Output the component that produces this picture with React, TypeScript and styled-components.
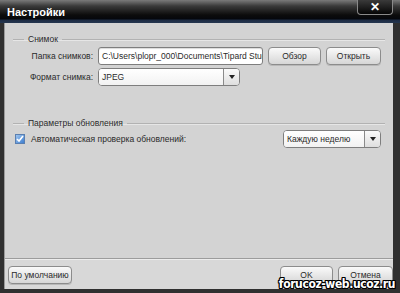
import styled, { createGlobalStyle } from 'styled-components';

const GlobalStyle = createGlobalStyle`
  html, body {
    margin: 0;
    padding: 0;
    background: #2a2a2a;
  }
  * {
    box-sizing: border-box;
  }
`;

const Window = styled.div`
  position: relative;
  width: 400px;
  height: 293px;
  display: flex;
  flex-direction: column;
  background: #303030;
  font-family: 'Liberation Sans', Arial, sans-serif;
  font-size: 8.5px;
  color: #2a2a2a;
  overflow: hidden;
`;

const TitleBar = styled.div`
  position: relative;
  height: 23px;
  flex-shrink: 0;
  display: flex;
  align-items: center;
  padding: 0 7px 2px;
  background: linear-gradient(#7a7a7a 0px, #3a3a3a 6px, #0c0c0c 15px, #05070c 19px, #1d2c44 20px, #25364f 23px);
`;

const Title = styled.span`
  color: #ffffff;
  font-weight: bold;
  font-size: 11px;
  margin-top: 2px;
`;

const CloseButton = styled.div`
  position: absolute;
  top: 0;
  right: 7px;
  width: 36px;
  height: 15px;
  border: 1px solid #8a8a8a;
  border-top: none;
  border-radius: 0 0 4px 4px;
  background: linear-gradient(#3a3a3a, #050505);
  color: #ffffff;
  font-size: 12px;
  font-weight: bold;
  display: flex;
  align-items: center;
  justify-content: center;
  line-height: 1;
`;

const Frame = styled.div`
  flex: 1;
  display: flex;
  flex-direction: column;
  margin: 0 7px 4px 4px;
  background: #d3d3d3;
  border-left: 1px solid #9a9a9a;
`;

const Content = styled.div`
  flex: 1;
  padding: 11px 8px 0 8px;
`;

const Group = styled.fieldset`
  margin: 0;
  padding: 0;
  border: none;
  border-top: 1px solid #b2b2b2;
  box-shadow: inset 0 1px 0 #e6e6e6;
`;

const Legend = styled.legend`
  margin-left: 11px;
  padding: 0 4px;
  color: #2a2a2a;
`;

const GroupBody = styled.div<{ $top: number; $bottom: number }>`
  display: flex;
  flex-direction: column;
  gap: 3px;
  padding: ${({ $top, $bottom }) => `${$top}px 0 ${$bottom}px 0`};
`;

const FormRow = styled.div`
  display: flex;
  align-items: center;
  gap: 5px;
`;

const Label = styled.span`
  width: 80px;
  text-align: right;
  white-space: nowrap;
`;

const PathInput = styled.div`
  width: 165px;
  height: 18px;
  background: #ffffff;
  border: 1px solid #7e7e7e;
  border-radius: 3px;
  padding: 0 3px;
  display: flex;
  align-items: center;
  white-space: nowrap;
  overflow: hidden;
  box-shadow: inset 0 1px 1px rgba(0, 0, 0, 0.15);
`;

const Button = styled.div<{ $width: number }>`
  width: ${({ $width }) => $width}px;
  height: 18px;
  border: 1px solid #8c8c8c;
  border-radius: 4px;
  background: linear-gradient(#fafafa, #e8e8e8 50%, #d6d6d6);
  box-shadow: 0 1px 0 #b8b8b8;
  display: flex;
  align-items: center;
  justify-content: center;
  white-space: nowrap;
`;

const Select = styled.div<{ $width: number }>`
  width: ${({ $width }) => $width}px;
  height: 18px;
  display: flex;
  border: 1px solid #7e7e7e;
  border-radius: 4px;
  overflow: hidden;
  background: #ffffff;
`;

const SelectValue = styled.div`
  flex: 1;
  display: flex;
  align-items: center;
  padding: 0 3px;
  background: linear-gradient(#ffffff, #f2f2f2);
  white-space: nowrap;
`;

const SelectArrow = styled.div`
  width: 16px;
  border-left: 1px solid #8a8a8a;
  background: linear-gradient(#fafafa, #dedede);
  display: flex;
  align-items: center;
  justify-content: center;
  &::after {
    content: '';
    border-left: 3px solid transparent;
    border-right: 3px solid transparent;
    border-top: 4px solid #222;
  }
`;

const CheckRow = styled.div`
  display: flex;
  align-items: center;
  justify-content: space-between;
  padding-left: 2px;
  padding-right: 4px;
`;

const CheckLabel = styled.label`
  display: flex;
  align-items: center;
  gap: 6px;
`;

const CheckBox = styled.span`
  width: 10px;
  height: 10px;
  border: 1px solid #5a7fb0;
  background: linear-gradient(135deg, #9ec4ee, #3f7fd0);
  display: flex;
  align-items: center;
  justify-content: center;
`;

const Footer = styled.div`
  height: 31px;
  flex-shrink: 0;
  display: flex;
  align-items: center;
  justify-content: space-between;
  padding: 1px 0 0 3px;
  border-top: 1px solid #9c9c9c;
  background: #d8d8d8;
  box-shadow: inset 0 1px 0 #ececec;
`;

const FooterRight = styled.div`
  display: flex;
  gap: 5px;
`;

const Watermark = styled.div`
  position: absolute;
  right: 5px;
  bottom: 2px;
  font-family: 'DejaVu Sans Condensed', 'DejaVu Sans', sans-serif;
  font-stretch: condensed;
  font-weight: bold;
  font-size: 12px;
  letter-spacing: -0.4px;
  color: #ffffff;
  text-shadow: -1px -1px 0 #000, 1px -1px 0 #000, -1px 1px 0 #000, 1px 1px 0 #000, 0 1px 0 #000, 0 -1px 0 #000, 1px 0 0 #000, -1px 0 0 #000;
`;

export default function App() {
  return (
    <>
      <GlobalStyle />
      <Window>
        <TitleBar>
          <Title>Настройки</Title>
          <CloseButton>✕</CloseButton>
        </TitleBar>
        <Frame>
          <Content>
            <Group>
              <Legend>Снимок</Legend>
              <GroupBody $top={3} $bottom={32}>
                <FormRow>
                  <Label>Папка снимков:</Label>
                  <PathInput>C:\Users\plopr_000\Documents\Tipard Studio</PathInput>
                  <Button $width={53}>Обзор</Button>
                  <Button $width={55}>Открыть</Button>
                </FormRow>
                <FormRow>
                  <Label>Формат снимка:</Label>
                  <Select $width={142}>
                    <SelectValue>JPEG</SelectValue>
                    <SelectArrow />
                  </Select>
                </FormRow>
              </GroupBody>
            </Group>
            <Group>
              <Legend>Параметры обновления</Legend>
              <GroupBody $top={2} $bottom={0}>
                <CheckRow>
                  <CheckLabel>
                    <CheckBox>
                      <svg width="8" height="8" viewBox="0 0 8 8">
                        <path d="M1 4 L3 6 L7 1" stroke="#ffffff" strokeWidth="1.6" fill="none" />
                      </svg>
                    </CheckBox>
                    Автоматическая проверка обновлений:
                  </CheckLabel>
                  <Select $width={98}>
                    <SelectValue>Каждую неделю</SelectValue>
                    <SelectArrow />
                  </Select>
                </CheckRow>
              </GroupBody>
            </Group>
          </Content>
          <Footer>
            <Button $width={64}>По умолчанию</Button>
            <FooterRight>
              <Button $width={53}>OK</Button>
              <Button $width={55}>Отмена</Button>
            </FooterRight>
          </Footer>
        </Frame>
        <Watermark>forucoz-web.ucoz.ru</Watermark>
      </Window>
    </>
  );
}
